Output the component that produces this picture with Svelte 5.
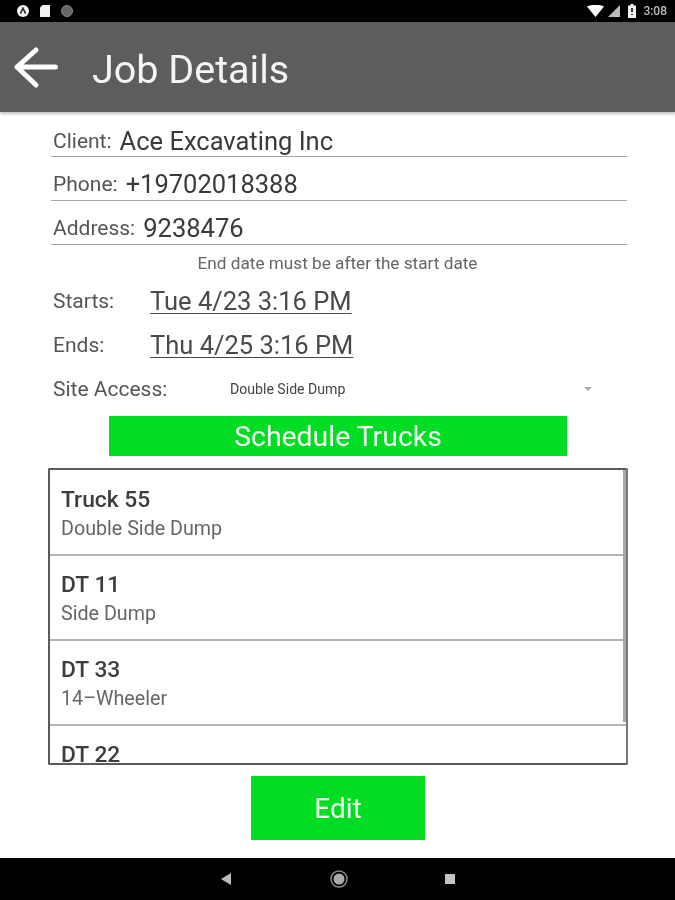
<script lang="ts">
	const fields = [
		{ label: 'Client:', value: 'Ace Excavating Inc' },
		{ label: 'Phone:', value: '+19702018388' },
		{ label: 'Address:', value: '9238476' }
	];

	const dates = [
		{ label: 'Starts:', value: 'Tue 4/23 3:16 PM' },
		{ label: 'Ends:', value: 'Thu 4/25 3:16 PM' }
	];

	const trucks = [
		{ name: 'Truck 55', type: 'Double Side Dump' },
		{ name: 'DT 11', type: 'Side Dump' },
		{ name: 'DT 33', type: '14–Wheeler' },
		{ name: 'DT 22', type: '' }
	];
</script>

<div class="screen">
	<div class="status">
		<div class="status-left">
			<svg width="14" height="14" viewBox="0 0 14 14">
				<circle cx="7" cy="7" r="6" fill="#f2f2f2" />
				<path d="M4.4 9.6 7 4.2l2.6 5.4" fill="none" stroke="#222" stroke-width="1.5" />
			</svg>
			<svg width="12" height="14" viewBox="0 0 12 14">
				<path d="M3.5 1H11v12H1V3.5z" fill="#f2f2f2" />
			</svg>
			<svg width="14" height="14" viewBox="0 0 14 14">
				<circle cx="7" cy="7" r="5.5" fill="#666" stroke="#888" />
			</svg>
		</div>
		<div class="status-right">
			<svg width="17" height="12" viewBox="0 0 17 12">
				<path d="M0 1.5Q8.5-2 17 1.5L8.5 12z" fill="#fff" />
			</svg>
			<svg width="12" height="12" viewBox="0 0 12 12">
				<path d="M12 0v12H0z" fill="#bbb" />
			</svg>
			<svg class="battery" width="8" height="14" viewBox="0 0 8 14">
				<path d="M2.5 0h3v1.5H8V14H0V1.5h2.5z" fill="#f2f2f2" />
				<path d="M4 4v4M4 10v1" stroke="#333" stroke-width="2" />
			</svg>
			<span class="clock">3:08</span>
		</div>
	</div>

	<header class="appbar">
		<svg class="back" width="46" height="46" viewBox="0 0 46 46">
			<path d="M43.5 23H5M24 6 5 23 24 41" fill="none" stroke="#fff" stroke-width="5" stroke-linecap="round" stroke-linejoin="round" />
		</svg>
		<h1>Job Details</h1>
	</header>

	<main class="content">
		<div class="fields">
			{#each fields as f}
				<div class="field">
					<span class="label">{f.label}</span>
					<span class="value">{f.value}</span>
				</div>
			{/each}
		</div>

		<p class="note">End date must be after the start date</p>

		<div class="dates">
			{#each dates as d}
				<div class="date-row">
					<span class="label date-label">{d.label}</span>
					<span class="date">{d.value}</span>
				</div>
			{/each}
		</div>

		<div class="site-row">
			<span class="label site-label">Site Access:</span>
			<span class="site-value">Double Side Dump</span>
			<span class="caret"></span>
		</div>

		<button class="schedule">Schedule Trucks</button>

		<div class="list">
			<div class="rows">
				{#each trucks as t}
					<div class="truck">
						<div class="truck-name">{t.name}</div>
						{#if t.type}
							<div class="truck-type">{t.type}</div>
						{/if}
					</div>
				{/each}
			</div>
			<div class="scrollbar"></div>
		</div>

		<button class="edit">Edit</button>
	</main>

	<nav class="navbar">
		<svg width="12" height="12" viewBox="0 0 12 12">
			<path d="M11 0v12L1 6z" fill="#bdbdbd" />
		</svg>
		<svg width="18" height="18" viewBox="0 0 18 18">
			<circle cx="9" cy="9" r="5.5" fill="#aaa" />
			<circle cx="9" cy="9" r="8" fill="none" stroke="#8a8a8a" stroke-width="1.5" />
		</svg>
		<svg width="10" height="10" viewBox="0 0 10 10">
			<rect width="10" height="10" fill="#c4c4c4" />
		</svg>
	</nav>
</div>

<style>
	:global(body) {
		background: #fff;
	}

	.screen {
		width: 675px;
		height: 900px;
		display: flex;
		flex-direction: column;
		overflow: hidden;
		background: #fff;
		font-family: Roboto, 'Liberation Sans', sans-serif;
		filter: blur(0.4px);
	}

	.status {
		height: 22px;
		flex: none;
		background: #000;
		display: flex;
		align-items: center;
		justify-content: space-between;
		padding: 0 8px 0 16px;
	}

	.status-left {
		display: flex;
		align-items: center;
		gap: 9px;
	}

	.status-right {
		display: flex;
		align-items: center;
		gap: 4px;
	}

	.battery {
		margin-left: 4px;
	}

	.clock {
		margin-left: 3px;
		font-size: 12px;
		font-weight: 500;
		color: #bdbdbd;
	}

	.appbar {
		height: 90px;
		flex: none;
		background: #5d5d5d;
		display: flex;
		align-items: center;
		padding-left: 12px;
		box-shadow: 0 2px 3px rgba(0, 0, 0, 0.25);
		position: relative;
	}

	.back {
		flex: none;
	}

	h1 {
		margin: 5px 0 0 34px;
		font-size: 39.5px;
		font-weight: 400;
		color: #f4f4f4;
	}

	.content {
		flex: 1;
		display: flex;
		flex-direction: column;
		padding-top: 13px;
	}

	.fields {
		margin: 0 48px 0 51px;
	}

	.field {
		height: 44px;
		box-sizing: border-box;
		border-bottom: 1px solid #a8a8a8;
		display: flex;
		align-items: baseline;
		gap: 8px;
		padding: 0 0 0 2px;
		line-height: 32px;
	}

	.field:first-child {
		height: 32px;
	}

	.field:not(:first-child) {
		padding-top: 11px;
	}

	.field .label {
		transform: translateY(-2px);
	}

	.label {
		font-size: 21px;
		color: #555;
	}

	.value {
		font-size: 25.5px;
		color: #3a3a3a;
	}

	.note {
		margin: 9px 0 0;
		font-size: 17.2px;
		line-height: 19px;
		text-align: center;
		color: #666;
	}

	.dates {
		margin-top: 6px;
	}

	.date-row {
		height: 44px;
		display: flex;
		align-items: center;
		padding-left: 53px;
	}

	.date-label {
		width: 97px;
	}

	.date {
		font-size: 25.5px;
		color: #4a4a4a;
		text-decoration: underline;
		text-underline-offset: 3px;
		text-decoration-thickness: 1px;
	}

	.site-row {
		height: 44px;
		display: flex;
		align-items: center;
		padding-left: 53px;
		position: relative;
	}

	.site-label {
		width: 177px;
	}

	.site-value {
		font-size: 14.1px;
		color: #444;
	}

	.caret {
		position: absolute;
		left: 584px;
		top: 20px;
		border-left: 4px solid transparent;
		border-right: 4px solid transparent;
		border-top: 4px solid #aaa;
	}

	button {
		display: block;
		border: none;
		padding: 0;
		background: #00dd22;
		color: #f2fff2;
		font-family: inherit;
		font-weight: 400;
	}

	.schedule {
		width: 458px;
		height: 40px;
		margin: 5px 0 0 109px;
		font-size: 28.4px;
	}

	.list {
		width: 580px;
		height: 297px;
		box-sizing: border-box;
		margin: 12px 0 0 48px;
		border: 2px solid #5a5a5a;
		border-radius: 2px;
		border-right-color: #777;
		position: relative;
		overflow: hidden;
	}

	.truck {
		height: 85px;
		box-sizing: border-box;
		padding: 17px 0 0 11px;
		border-bottom: 2px solid #b4b4b4;
	}

	.truck:first-child {
		height: 86px;
		padding-top: 18px;
	}

	.truck-name {
		font-size: 22.8px;
		line-height: 24px;
		font-weight: 500;
		color: #3c3c3c;
	}

	.truck-type {
		margin-top: 6px;
		font-size: 19.7px;
		line-height: 22px;
		color: #666;
	}

	.scrollbar {
		position: absolute;
		right: 0;
		top: 0;
		width: 3px;
		height: 252px;
		background: #a8a8a8;
	}

	.edit {
		width: 174px;
		height: 64px;
		margin: 11px 0 0 251px;
		font-size: 28px;
	}

	.navbar {
		height: 42px;
		flex: none;
		background: #000;
		display: flex;
		align-items: center;
		justify-content: center;
		gap: 97.5px;
		margin-top: auto;
	}
</style>
